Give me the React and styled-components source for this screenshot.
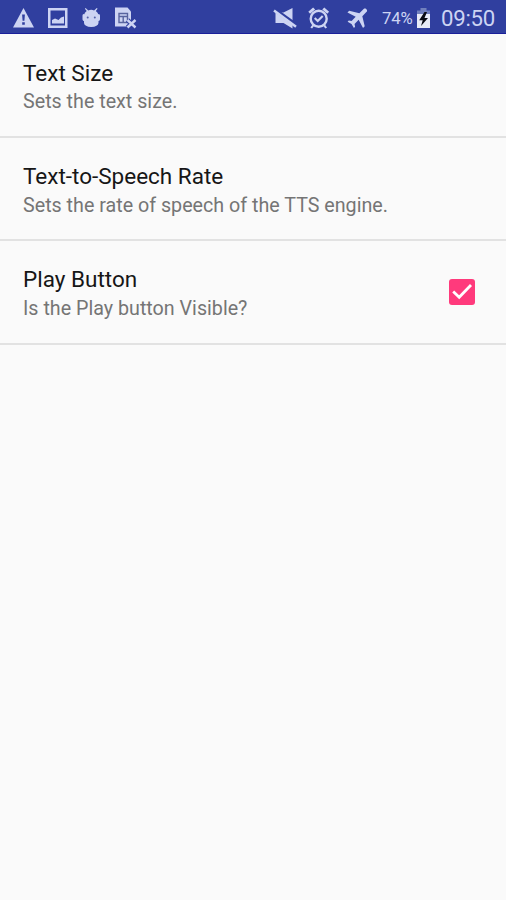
import React from 'react';
import styled, { createGlobalStyle } from 'styled-components';

const GlobalStyle = createGlobalStyle`
  * { box-sizing: border-box; }
  body { margin: 0; background: #fafafa; font-family: Roboto, "Noto Sans", sans-serif; }
`;

const Screen = styled.div`
  display: flex;
  flex-direction: column;
  width: 506px;
  height: 900px;
  background: #fafafa;
  overflow: hidden;
`;

const StatusBar = styled.header`
  display: flex;
  justify-content: space-between;
  height: 34px;
  padding: 0 11px 0 12px;
  background: #303f9f;
  border-bottom: 1px solid #1a1f9a;
  color: #cdd4f3;
`;

const StatusGroup = styled.div`
  display: flex;
  align-items: flex-start;
  padding-top: 6px;
  gap: ${(p) => p.$gap || 0}px;
`;

const Icon = styled.svg`
  display: block;
  flex: none;
  width: ${(p) => p.$w || 24}px;
  height: 24px;
  margin-right: ${(p) => p.$after || 0}px;
  fill: #cdd4f3;
`;

const Percent = styled.span`
  width: 34px;
  font-size: 16.7px;
  line-height: 26px;
  letter-spacing: -0.1px;
  white-space: nowrap;
`;

const Clock = styled.span`
  width: 54px;
  font-size: 22.2px;
  line-height: 25px;
  letter-spacing: -0.25px;
  white-space: nowrap;
`;

const Row = styled.section`
  display: flex;
  justify-content: space-between;
  align-items: center;
  height: ${(p) => p.$height}px;
  padding: 0 31px 0 23px;
  border-bottom: 2px solid #e2e2e2;
`;

const Labels = styled.div`
  display: flex;
  flex-direction: column;
  padding-top: 5px;
`;

const Title = styled.div`
  font-size: 22.5px;
  line-height: ${(p) => p.$lineHeight}px;
  padding-bottom: ${(p) => 28 - p.$lineHeight}px;
  color: #161616;
`;

const Summary = styled.div`
  font-size: 19.7px;
  line-height: 29px;
  color: #757575;
`;

const Checkbox = styled.button`
  width: 26px;
  height: 26px;
  padding: 0;
  border: 0;
  border-radius: 3px;
  background: #ff3a7c;
  svg { display: block; }
`;

const WarningIcon = () => (
  <Icon viewBox="0 0 24 24">
    <path fillRule="evenodd" d="M11.5 2 22 21.5H1ZM10.1 8.5l.5 6.2h1.8l.5-6.2ZM10.2 16.2v2.6h2.6v-2.6Z" />
  </Icon>
);
const PictureIcon = () => (
  <Icon viewBox="0 0 24 24">
    <path fillRule="evenodd" d="M2 2h19.5v20H2ZM4.5 4.5v15H19v-15Z" />
    <path d="M6 17.5V14l3-1.5 3.5 1.5 2.5-2.5 3-1v7Z" />
  </Icon>
);
const RobotIcon = () => (
  <Icon viewBox="0 0 24 24">
    <path d="M5.6 2 8.3 4.4Q11.2 3.2 14.1 4.4L16.8 2 17.6 2.8 15.8 5Q18 6.4 18.5 9H4Q4.5 6.4 6.7 5L4.9 2.8Z" />
    <path d="M2.5 9.5Q2.5 8 3.7 8L4.5 8.5H18L18.8 8Q20 8 20 9.5V13.5Q19.5 15 18.5 15V17Q18 20.7 11.2 21Q4.5 20.7 4 17V15Q2.9 15 2.5 13.5Z" />
    <g fill="#5360a8"><circle cx="7.7" cy="11.5" r="1" /><circle cx="14.8" cy="11.5" r="1" /></g>
  </Icon>
);
const SimCardIcon = () => (
  <Icon viewBox="0 0 24 24">
    <path d="M1 1.5H13.5L17 5.5V20.5H1Z" />
    <path d="M5 7.5h8.5v9H5ZM5 10.5h8.5M9.2 10.5v6" fill="none" stroke="#58649f" strokeWidth="1.4" />
    <path d="m13.5 14 8 7.5m0-7.5-8 7.5" fill="none" stroke="#303f9f" strokeWidth="4.6" />
    <path d="m13.5 14 8 7.5m0-7.5-8 7.5" fill="none" stroke="#cdd4f3" strokeWidth="2.4" />
  </Icon>
);
const MuteIcon = () => (
  <Icon viewBox="0 0 24 24" $after={10}>
    <path d="M2.5 6.5h8L19.5 2v20.5l-9-5.5h-8Z" />
    <path d="m0 2.4 24 17.2" stroke="#303f9f" strokeWidth="4" />
    <path d="m1 4.5 22 16.2" stroke="#cdd4f3" strokeWidth="2.5" />
  </Icon>
);
const AlarmIcon = () => (
  <Icon viewBox="0 0 24 24" $after={15}>
    <path d="m1.3 5.8 4.8-4.2 2 2-5 4.2ZM22.1 5.8l-4.8-4.2-2 2 5 4.2Z" />
    <circle cx="11.7" cy="12.7" r="8" fill="none" stroke="#cdd4f3" strokeWidth="2.4" />
    <path d="m7.7 12 3 3 5-5M6.2 19.3 4.2 22M17.2 19.3l2 2.7" fill="none" stroke="#cdd4f3" strokeWidth="2.1" />
  </Icon>
);
const AirplaneIcon = () => (
  <Icon viewBox="0 0 24 24" $after={12}>
    <path transform="translate(1 -.5) rotate(45 12 11) translate(-1.2 -1.5) scale(1.1)" d="M10.1 9 V3.5C10.1 1.3 13.9 1.3 13.9 3.5V9L22 14v2.2l-8.1-2.5V19l2.2 1.5V22L12 21l-4 1v-1.5l2.1-1.5v-5.3L2 16.2V14Z" />
  </Icon>
);
const BatteryIcon = () => (
  <Icon $w={15} viewBox="0 0 15 24" $after={10}>
    <path fill="#7180bd" d="M4.5 2h6v2.5H14V9H1V4.5h3.5Z" />
    <path fill="#e8ebf7" d="M1 8h13v14H1Z" />
    <path fill="#080a12" d="m8.5 6-5.3 8.2h3.5L5 20l7-8H8.5L11 6Z" />
  </Icon>
);

const leftIcons = [WarningIcon, PictureIcon, RobotIcon, SimCardIcon];

const preferences = [
  { title: 'Text Size', summary: 'Sets the text size.', height: 104, lineHeight: 28 },
  { title: 'Text-to-Speech Rate', summary: 'Sets the rate of speech of the TTS engine.', height: 103, lineHeight: 26 },
  { title: 'Play Button', summary: 'Is the Play button Visible?', height: 104, lineHeight: 26, checked: true },
];

export default function App() {
  return (
    <Screen>
      <GlobalStyle />
      <StatusBar>
        <StatusGroup $gap={10}>
          {leftIcons.map((Glyph, i) => <Glyph key={i} />)}
        </StatusGroup>
        <StatusGroup>
          <MuteIcon />
          <AlarmIcon />
          <AirplaneIcon />
          <Percent>74%</Percent>
          <BatteryIcon />
          <Clock>09:50</Clock>
        </StatusGroup>
      </StatusBar>
      <main>
        {preferences.map((item) => (
          <Row key={item.title} $height={item.height}>
            <Labels>
              <Title $lineHeight={item.lineHeight}>{item.title}</Title>
              <Summary>{item.summary}</Summary>
            </Labels>
            {item.checked && (
              <Checkbox role="checkbox" aria-checked="true" aria-label={item.title}>
                <svg width="26" height="26" viewBox="0 0 26 26" fill="none">
                  <path d="m4.2 12.5 6 5.7L22 6" stroke="#fff" strokeWidth="2.8" />
                </svg>
              </Checkbox>
            )}
          </Row>
        ))}
      </main>
    </Screen>
  );
}
